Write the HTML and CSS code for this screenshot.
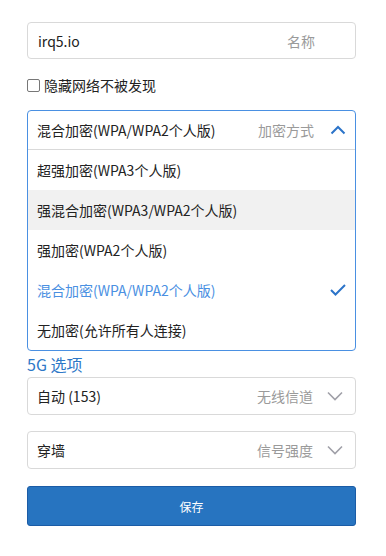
FILE: index.html
```html
<!doctype html>
<html lang="zh-CN">
<head>
  <meta charset="UTF-8">
  <meta name="viewport" content="width=device-width, initial-scale=1.0">
  <title>无线设置</title>
  <link rel="stylesheet" href="styles.css">
</head>
<body>

<form class="WifiForm">
  <div class="Field Field--input">
    <span class="Field-value">irq5.io</span>
    <span class="Field-label">名称</span>
  </div>

  <label class="Check">
    <span class="Check-box"></span>
    <span class="Check-text">隐藏网络不被发现</span>
  </label>

  <div class="Select Select--open">
    <div class="Select-head">
      <span class="Field-value">混合加密(WPA/WPA2个人版)</span>
      <span class="Field-label">加密方式</span>
      <svg class="Select-icon" width="16" height="10" viewBox="0 0 16 10"><path d="M1.5 8.5 L8 2 L14.5 8.5" fill="none" stroke="#2c74c9" stroke-width="2"/></svg>
    </div>
    <ul class="Select-list">
      <li class="Select-option">超强加密(WPA3个人版)</li>
      <li class="Select-option is-hover">强混合加密(WPA3/WPA2个人版)</li>
      <li class="Select-option">强加密(WPA2个人版)</li>
      <li class="Select-option is-selected">
        <span>混合加密(WPA/WPA2个人版)</span>
        <svg class="Select-icon" width="16" height="12" viewBox="0 0 16 12"><path d="M1 6 L5.5 10.5 L15 1" fill="none" stroke="#2c74c9" stroke-width="2"/></svg>
      </li>
      <li class="Select-option">无加密(允许所有人连接)</li>
    </ul>
  </div>

  <div class="Section">5G 选项</div>

  <div class="Select">
    <div class="Select-head Select-head--closed">
      <span class="Field-value">自动 (153)</span>
      <span class="Field-label">无线信道</span>
      <svg class="Select-icon" width="16" height="10" viewBox="0 0 16 10"><path d="M1 1.5 L8 8.5 L15 1.5" fill="none" stroke="#a0a0a8" stroke-width="1.6"/></svg>
    </div>
  </div>

  <div class="Select Select--gap">
    <div class="Select-head Select-head--closed">
      <span class="Field-value">穿墙</span>
      <span class="Field-label">信号强度</span>
      <svg class="Select-icon" width="16" height="10" viewBox="0 0 16 10"><path d="M1 1.5 L8 8.5 L15 1.5" fill="none" stroke="#a0a0a8" stroke-width="1.6"/></svg>
    </div>
  </div>

  <button type="button" class="SaveButton">保存</button>
</form>

</body>
</html>
```

FILE: styles.css
```css
body {
  margin: 0;
  background-color: white;
  color: #222;
  font-family: "Noto Sans CJK SC", "Noto Sans", sans-serif;
  font-size: 14px;
}

.WifiForm {
  display: flex;
  flex-direction: column;
  width: 329px;
  padding: 22px 0 0 27px;
}

.Field {
  display: flex;
  align-items: center;
  box-sizing: border-box;
  height: 37px;
  padding: 0 40px 0 10px;
  border: 1px solid #d9d9d9;
  border-radius: 4px;
}

.Field-value {
  flex: 1;
  line-height: 20px;
  white-space: nowrap;
}

.Field-label {
  color: #9a9a9a;
  line-height: 20px;
}

.Check {
  display: flex;
  align-items: center;
  column-gap: 4px;
  margin-top: 19px;
  line-height: 14px;
}

.Check-box {
  box-sizing: border-box;
  width: 13px;
  height: 13px;
  border: 1px solid #777;
  border-radius: 2px;
}

.Select {
  box-sizing: border-box;
  border: 1px solid #d9d9d9;
  border-radius: 4px;
}

.Select--open {
  margin-top: 18px;
  border-color: #4a90e2;
}

.Select--gap {
  margin-top: 16px;
}

.Select-head {
  display: flex;
  align-items: center;
  column-gap: 14px;
  height: 38px;
  padding: 0 9px 0 9px;
  border-bottom: 1px solid #d9d9d9;
}

.Select-head .Field-label {
  margin-right: 2px;
}

.Select-head--closed {
  height: 36px;
  padding-right: 12px;
  border-bottom: 0;
}

.Select-head--closed .Field-label {
  margin-right: 0;
}

.Select-icon {
  flex-shrink: 0;
}

.Select-list {
  margin: 0;
  padding: 0;
  list-style-type: none;
}

.Select-option {
  display: flex;
  align-items: center;
  justify-content: space-between;
  height: 40px;
  padding: 0 9px;
  line-height: 20px;
}

.Select-option.is-hover {
  background-color: #f1f1f1;
}

.Select-option.is-selected {
  color: #4a90e2;
}

.Section {
  margin: 4px 0;
  color: #2e78c7;
  font-size: 16px;
  line-height: 18px;
}

.SaveButton {
  box-sizing: border-box;
  height: 40px;
  margin-top: 17px;
  border: 1px solid #1b5ca6;
  border-radius: 3px;
  background-color: #2774c0;
  color: white;
  font-family: inherit;
  font-size: 12px;
}
```
